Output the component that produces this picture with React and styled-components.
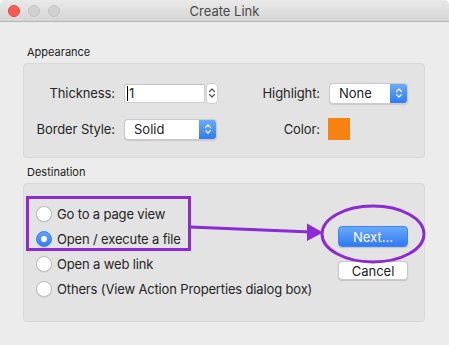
import React from "react";
import styled, { createGlobalStyle } from "styled-components";

const Global = createGlobalStyle`
  html, body { margin: 0; padding: 0; background: #ffffff; }
  body { font-family: Inter, "Liberation Sans", Arial, sans-serif; -webkit-font-smoothing: antialiased; }
  * { box-sizing: border-box; }
`;

const Window = styled.div`
  position: relative;
  width: 449px;
  height: 345px;
  background: #ececec;
  border-radius: 5px 5px 0 0;
  overflow: hidden;
  color: #262626;
`;

const TitleBar = styled.div`
  height: 22px;
  display: flex;
  align-items: center;
  position: relative;
  background: linear-gradient(#e9e9e9, #d6d6d6);
  border-bottom: 1px solid #b4b4b4;
  padding-left: 8px;
  gap: 8px;
`;

const Light = styled.span`
  width: 12px;
  height: 12px;
  border-radius: 50%;
  background: ${(p) => (p.$red ? "#fc5b57" : "#d1d1d1")};
  border: 1px solid ${(p) => (p.$red ? "#e0443e" : "#c2c2c2")};
`;

const Title = styled.div`
  position: absolute;
  left: 0;
  right: 0;
  text-align: center;
  font-size: 13px;
  color: #4a4a4a;
  pointer-events: none;
`;

const Content = styled.div`
  padding: 24px 24px 0 23px;
`;

const SectionLabel = styled.div`
  font-size: 11px;
  line-height: 13px;
  padding-left: 4px;
  margin-top: ${(p) => p.$top || 0}px;
  margin-bottom: 4px;
  color: #222;
`;

const Group = styled.div`
  background: #e3e3e3;
  border: 1px solid #d9d9d9;
  border-radius: 4px;
`;

const AppearanceGrid = styled.div`
  display: grid;
  grid-template-columns: 91px 94px 93px 80px;
  column-gap: 9px;
  row-gap: 16px;
  grid-auto-rows: 20px;
  align-items: center;
  padding: 19px 0 18px 0;
`;

const FieldLabel = styled.label`
  font-size: 13px;
  letter-spacing: -0.1px;
  text-align: right;
  white-space: nowrap;
  color: #262626;
`;

const Combo = styled.div`
  display: flex;
  align-items: center;
  gap: 1px;
  height: 20px;
`;

const TextInput = styled.div`
  width: 81px;
  height: 19px;
  background: #fff;
  border: 1px solid #d0d0d0;
  border-top-color: #c4c4c4;
  display: flex;
  align-items: center;
  padding-left: 2px;
  font-size: 13px;
`;

const Caret = styled.span`
  display: inline-block;
  width: 1px;
  height: 15px;
  background: #000;
  margin-right: 1px;
`;

const Stepper = styled.div`
  width: 12px;
  height: 21px;
  background: #fff;
  border: 1px solid #cfcfcf;
  border-radius: 4px;
  display: flex;
  align-items: center;
  justify-content: center;
`;

const Popup = styled.div`
  width: ${(p) => p.$w}px;
  height: 21px;
  display: flex;
  background: #fff;
  border: 1px solid #cbcbcb;
  border-radius: 4px;
  overflow: hidden;
  box-shadow: 0 0.5px 1px rgba(0, 0, 0, 0.12);
`;

const PopupText = styled.div`
  flex: 1;
  font-size: 13px;
  line-height: 19px;
  padding-left: 9px;
  color: #222;
`;

const PopupArrow = styled.div`
  width: 17px;
  background: linear-gradient(#6aaaf8, #2d7cf3);
  display: flex;
  align-items: center;
  justify-content: center;
`;

const Swatch = styled.div`
  width: 22px;
  height: 22px;
  background: #f7820f;
  margin-left: -1px;
`;

const DestBody = styled.div`
  display: flex;
  height: 137px;
`;

const RadioList = styled.div`
  display: flex;
  flex-direction: column;
  gap: 9px;
  padding: 22px 0 0 12px;
`;

const RadioRow = styled.label`
  display: flex;
  align-items: center;
  gap: 5px;
  height: 16px;
  font-size: 13px;
  letter-spacing: -0.15px;
  color: #262626;
  white-space: nowrap;
`;

const RadioDot = styled.span`
  width: 16px;
  height: 16px;
  border-radius: 50%;
  flex: none;
  display: flex;
  align-items: center;
  justify-content: center;
  background: ${(p) => (p.$on ? "linear-gradient(#5fa2f9, #3180f5)" : "#fff")};
  border: 1px solid ${(p) => (p.$on ? "#3d82f0" : "#bdbdbd")};
  box-shadow: 0 0.5px 1px rgba(0, 0, 0, 0.12);
  &::after {
    content: "";
    display: ${(p) => (p.$on ? "block" : "none")};
    width: 6px;
    height: 6px;
    border-radius: 50%;
    background: #fff;
  }
`;

const ButtonCol = styled.div`
  margin-left: auto;
  display: flex;
  flex-direction: column;
  gap: 14px;
  padding: 42px 16px 0 0;
`;

const Button = styled.div`
  width: 70px;
  height: ${(p) => (p.$primary ? 21 : 19)}px;
  border-radius: 4px;
  font-size: 13px;
  display: flex;
  align-items: center;
  justify-content: center;
  color: ${(p) => (p.$primary ? "#fff" : "#222")};
  background: ${(p) =>
    p.$primary ? "linear-gradient(#6aa9fa, #2f7bf5)" : "#fff"};
  border: 1px solid ${(p) => (p.$primary ? "#3f85ef" : "#c9c9c9")};
  box-shadow: 0 0.5px 1px rgba(0, 0, 0, 0.15);
`;

const Overlay = styled.svg`
  position: absolute;
  left: 0;
  top: 0;
  pointer-events: none;
`;

const UpDown = ({ color }) => (
  <svg width="8" height="12" viewBox="0 0 8 12">
    <path d="M1.5 4.5 L4 2 L6.5 4.5 M1.5 7.5 L4 10 L6.5 7.5" fill="none" stroke={color} strokeWidth="1.2" strokeLinecap="round" strokeLinejoin="round" />
  </svg>
);

export default function App() {
  return (
    <>
      <Global />
      <Window>
        <TitleBar>
          <Light $red />
          <Light />
          <Light />
          <Title>Create Link</Title>
        </TitleBar>
        <Content>
          <SectionLabel>Appearance</SectionLabel>
          <Group>
            <AppearanceGrid>
              <FieldLabel>Thickness:</FieldLabel>
              <Combo>
                <TextInput>
                  <Caret />1
                </TextInput>
                <Stepper>
                  <UpDown color="#555" />
                </Stepper>
              </Combo>
              <FieldLabel>Highlight:</FieldLabel>
              <Popup $w={79}>
                <PopupText>None</PopupText>
                <PopupArrow>
                  <UpDown color="#fff" />
                </PopupArrow>
              </Popup>
              <FieldLabel>Border Style:</FieldLabel>
              <Popup $w={93}>
                <PopupText>Solid</PopupText>
                <PopupArrow>
                  <UpDown color="#fff" />
                </PopupArrow>
              </Popup>
              <FieldLabel>Color:</FieldLabel>
              <Swatch />
            </AppearanceGrid>
          </Group>
          <SectionLabel $top={8}>Destination</SectionLabel>
          <Group>
            <DestBody>
              <RadioList>
                <RadioRow><RadioDot />Go to a page view</RadioRow>
                <RadioRow><RadioDot $on />Open / execute a file</RadioRow>
                <RadioRow><RadioDot />Open a web link</RadioRow>
                <RadioRow><RadioDot />Others (View Action Properties dialog box)</RadioRow>
              </RadioList>
              <ButtonCol>
                <Button $primary>Next...</Button>
                <Button>Cancel</Button>
              </ButtonCol>
            </DestBody>
          </Group>
        </Content>
        <Overlay width="449" height="345" viewBox="0 0 449 345">
          <g stroke="#8b2ad6" strokeWidth="3" fill="none">
            <rect x="27.5" y="197.5" width="162" height="52" />
            <line x1="190" y1="227" x2="311" y2="232" />
            <ellipse cx="373" cy="234" rx="51" ry="28" />
          </g>
          <polygon points="307,223.5 323,232.5 307,241" fill="#8b2ad6" />
        </Overlay>
      </Window>
    </>
  );
}
